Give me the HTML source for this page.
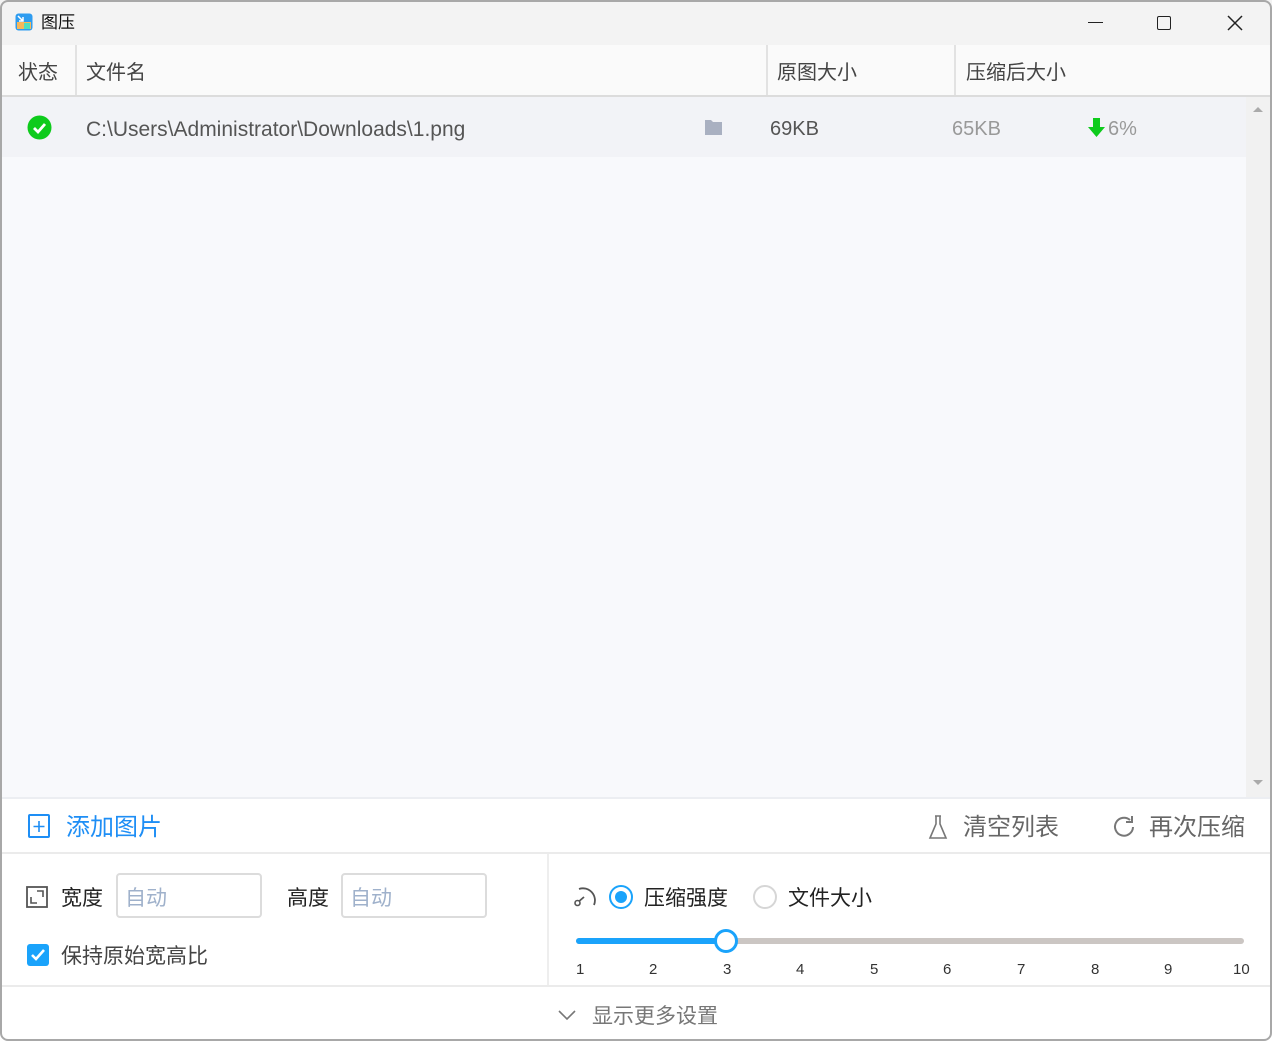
<!DOCTYPE html>
<html><head><meta charset="utf-8"><style>
*{margin:0;padding:0;box-sizing:border-box}
body{width:1272px;height:1041px;background:#fff;font-family:"Liberation Sans","Noto Sans CJK SC",sans-serif;position:relative;overflow:hidden}
.frame{position:absolute;left:0;top:0;width:1272px;height:1041px;border:2px solid #a8a8a8;border-radius:8px;z-index:10}
.a{position:absolute}
.t{position:absolute;white-space:nowrap;line-height:1;margin-top:2px}
</style></head><body>
<div class="a" style="left:0;top:0;width:1272px;height:45px;background:#f3f3f3"></div>
<svg class="a" style="left:15px;top:13px" width="18" height="18" viewBox="0 0 18 18"><rect x="0.5" y="0.5" width="17" height="17" rx="3" fill="#2e9cf0"/><rect x="2" y="9" width="14" height="7" fill="#f7b85a"/><rect x="9" y="10" width="6" height="6" fill="#4fe0c0"/><path d="M3 3l5 5M8 4v4H4" stroke="#fff" stroke-width="1.5" fill="none"/></svg>
<div class="t" style="left:41px;top:12px;font-size:17px;color:#111">图压</div>
<div class="a" style="left:1088px;top:22px;width:15px;height:1.3px;background:#222"></div>
<div class="a" style="left:1157px;top:16px;width:14px;height:14px;border:1.5px solid #222;border-radius:2px"></div>
<svg class="a" style="left:1227px;top:15px" width="16" height="16"><path d="M1 1L15 15M15 1L1 15" stroke="#222" stroke-width="1.5"/></svg>
<!-- header -->
<div class="a" style="left:0;top:45px;width:1272px;height:52px;background:#fafafa;border-bottom:2px solid #dcdcdc"></div>
<div class="a" style="left:75px;top:45px;width:2px;height:50px;background:#e2e2e2"></div>
<div class="a" style="left:766px;top:45px;width:2px;height:50px;background:#e2e2e2"></div>
<div class="a" style="left:954px;top:45px;width:2px;height:50px;background:#e2e2e2"></div>
<div class="t" style="left:18px;top:61px;font-size:20px;color:#444">状态</div>
<div class="t" style="left:86px;top:61px;font-size:20px;color:#444">文件名</div>
<div class="t" style="left:777px;top:61px;font-size:20px;color:#444">原图大小</div>
<div class="t" style="left:966px;top:61px;font-size:20px;color:#444">压缩后大小</div>
<!-- list -->
<div class="a" style="left:0;top:97px;width:1246px;height:700px;background:#f8f9fc"></div>
<div class="a" style="left:0;top:97px;width:1246px;height:60px;background:#f2f3f7"></div>
<div class="a" style="left:1246px;top:97px;width:26px;height:700px;background:#f1f1f1"></div>
<svg class="a" style="left:1252px;top:105px" width="12" height="8"><path d="M1 7L6 2 11 7Z" fill="#aaa"/></svg>
<svg class="a" style="left:1252px;top:779px" width="12" height="8"><path d="M1 1L6 6 11 1Z" fill="#aaa"/></svg>
<svg class="a" style="left:27px;top:115px" width="25" height="25"><circle cx="12.5" cy="12.5" r="12" fill="#0ecb1c"/><path d="M7 13l4 4 7-8" stroke="#fff" stroke-width="2.8" fill="none"/></svg>
<div class="t" style="left:86px;top:117px;font-size:21px;color:#555">C:\Users\Administrator\Downloads\1.png</div>
<svg class="a" style="left:704px;top:118px" width="19" height="18"><path d="M1 2h6l2 2h9v3H1Z M1 7h17v10H1Z" fill="#a9b0c1"/></svg>
<div class="t" style="left:770px;top:117px;font-size:20px;color:#555">69KB</div>
<div class="t" style="left:952px;top:117px;font-size:20px;color:#999">65KB</div>
<svg class="a" style="left:1088px;top:118px" width="17" height="19"><path d="M5 0h7v9h5l-8.5 10L0 9h5Z" fill="#0ecb1c"/></svg>
<div class="t" style="left:1108px;top:117px;font-size:20px;color:#999">6%</div>
<!-- toolbar -->
<div class="a" style="left:0;top:797px;width:1272px;height:2px;background:#eceef2"></div>
<div class="a" style="left:0;top:852px;width:1272px;height:2px;background:#ebebeb"></div>
<div class="a" style="left:28px;top:814px;width:22px;height:24px;border:2px solid #1e8ef5;border-radius:2px"></div>
<svg class="a" style="left:28px;top:815px" width="22" height="22"><path d="M11 6v11M5.5 11.5h11" stroke="#1e8ef5" stroke-width="1.6"/></svg>
<div class="t" style="left:66px;top:814px;font-size:24px;color:#1e8ef5">添加图片</div>
<svg class="a" style="left:928px;top:814px" width="20" height="26"><path d="M7 2h6M8 2v8L2 24h16L12 10V2" stroke="#777" stroke-width="1.6" fill="none"/></svg>
<div class="t" style="left:963px;top:814px;font-size:24px;color:#666">清空列表</div>
<svg class="a" style="left:1111px;top:814px" width="26" height="26"><path d="M19 6A9 9 0 1 0 22 13" stroke="#777" stroke-width="2" fill="none"/><path d="M15 8h6V2" stroke="#777" stroke-width="2" fill="none"/></svg>
<div class="t" style="left:1149px;top:814px;font-size:24px;color:#666">再次压缩</div>
<!-- settings -->
<div class="a" style="left:547px;top:854px;width:2px;height:132px;background:#eeeeee"></div>
<div class="a" style="left:0;top:985px;width:1272px;height:2px;background:#ebebeb"></div>
<svg class="a" style="left:26px;top:886px" width="22" height="22"><rect x="1" y="1" width="20" height="20" fill="none" stroke="#555" stroke-width="1.8"/><path d="M5 11v6h6M11 5h6v6" stroke="#555" stroke-width="1.6" fill="none"/></svg>
<div class="t" style="left:61px;top:886px;font-size:21px;color:#222">宽度</div>
<div class="a" style="left:116px;top:873px;width:146px;height:45px;border:2px solid #dcdcdc;border-radius:4px"></div>
<div class="t" style="left:125px;top:886px;font-size:21px;color:#9fb1cb">自动</div>
<div class="t" style="left:287px;top:886px;font-size:21px;color:#222">高度</div>
<div class="a" style="left:341px;top:873px;width:146px;height:45px;border:2px solid #dcdcdc;border-radius:4px"></div>
<div class="t" style="left:350px;top:886px;font-size:21px;color:#9fb1cb">自动</div>
<div class="a" style="left:27px;top:944px;width:22px;height:22px;background:#1aa3fb;border-radius:3px"></div>
<svg class="a" style="left:27px;top:944px" width="22" height="22"><path d="M5 11l4 4 8-9" stroke="#fff" stroke-width="2.6" fill="none"/></svg>
<div class="t" style="left:61px;top:944px;font-size:21px;color:#444">保持原始宽高比</div>
<svg class="a" style="left:573px;top:885px" width="24" height="24"><path d="M6 4A12 12 0 0 1 21 20" stroke="#555" stroke-width="1.8" fill="none"/><path d="M4 18l7-6" stroke="#555" stroke-width="1.8"/><circle cx="4.5" cy="18" r="2.5" fill="#fff" stroke="#555" stroke-width="1.6"/></svg>
<div class="a" style="left:609px;top:885px;width:24px;height:24px;border:2px solid #1aa3fb;border-radius:50%"></div>
<div class="a" style="left:615px;top:891px;width:12px;height:12px;background:#1aa3fb;border-radius:50%"></div>
<div class="t" style="left:644px;top:886px;font-size:21px;color:#222">压缩强度</div>
<div class="a" style="left:753px;top:885px;width:24px;height:24px;border:2px solid #d6d6d6;border-radius:50%"></div>
<div class="t" style="left:788px;top:886px;font-size:21px;color:#222">文件大小</div>
<div class="a" style="left:576px;top:938px;width:668px;height:6px;background:#cbc6c3;border-radius:3px"></div>
<div class="a" style="left:576px;top:938px;width:150px;height:6px;background:#1aa3fb;border-radius:3px"></div>
<div class="a" style="left:714px;top:929px;width:24px;height:24px;border:3px solid #1aa3fb;background:#fff;border-radius:50%"></div>
<div class="t" style="left:576px;top:960px;font-size:15px;color:#333">1</div>
<div class="t" style="left:649px;top:960px;font-size:15px;color:#333">2</div>
<div class="t" style="left:723px;top:960px;font-size:15px;color:#333">3</div>
<div class="t" style="left:796px;top:960px;font-size:15px;color:#333">4</div>
<div class="t" style="left:870px;top:960px;font-size:15px;color:#333">5</div>
<div class="t" style="left:943px;top:960px;font-size:15px;color:#333">6</div>
<div class="t" style="left:1017px;top:960px;font-size:15px;color:#333">7</div>
<div class="t" style="left:1091px;top:960px;font-size:15px;color:#333">8</div>
<div class="t" style="left:1164px;top:960px;font-size:15px;color:#333">9</div>
<div class="t" style="left:1233px;top:960px;font-size:15px;color:#333">10</div>
<svg class="a" style="left:557px;top:1008px" width="20" height="14"><path d="M2 3l8 8 8-8" stroke="#777" stroke-width="1.6" fill="none"/></svg>
<div class="t" style="left:592px;top:1004px;font-size:21px;color:#777">显示更多设置</div>
<div class="frame"></div>
</body></html>
